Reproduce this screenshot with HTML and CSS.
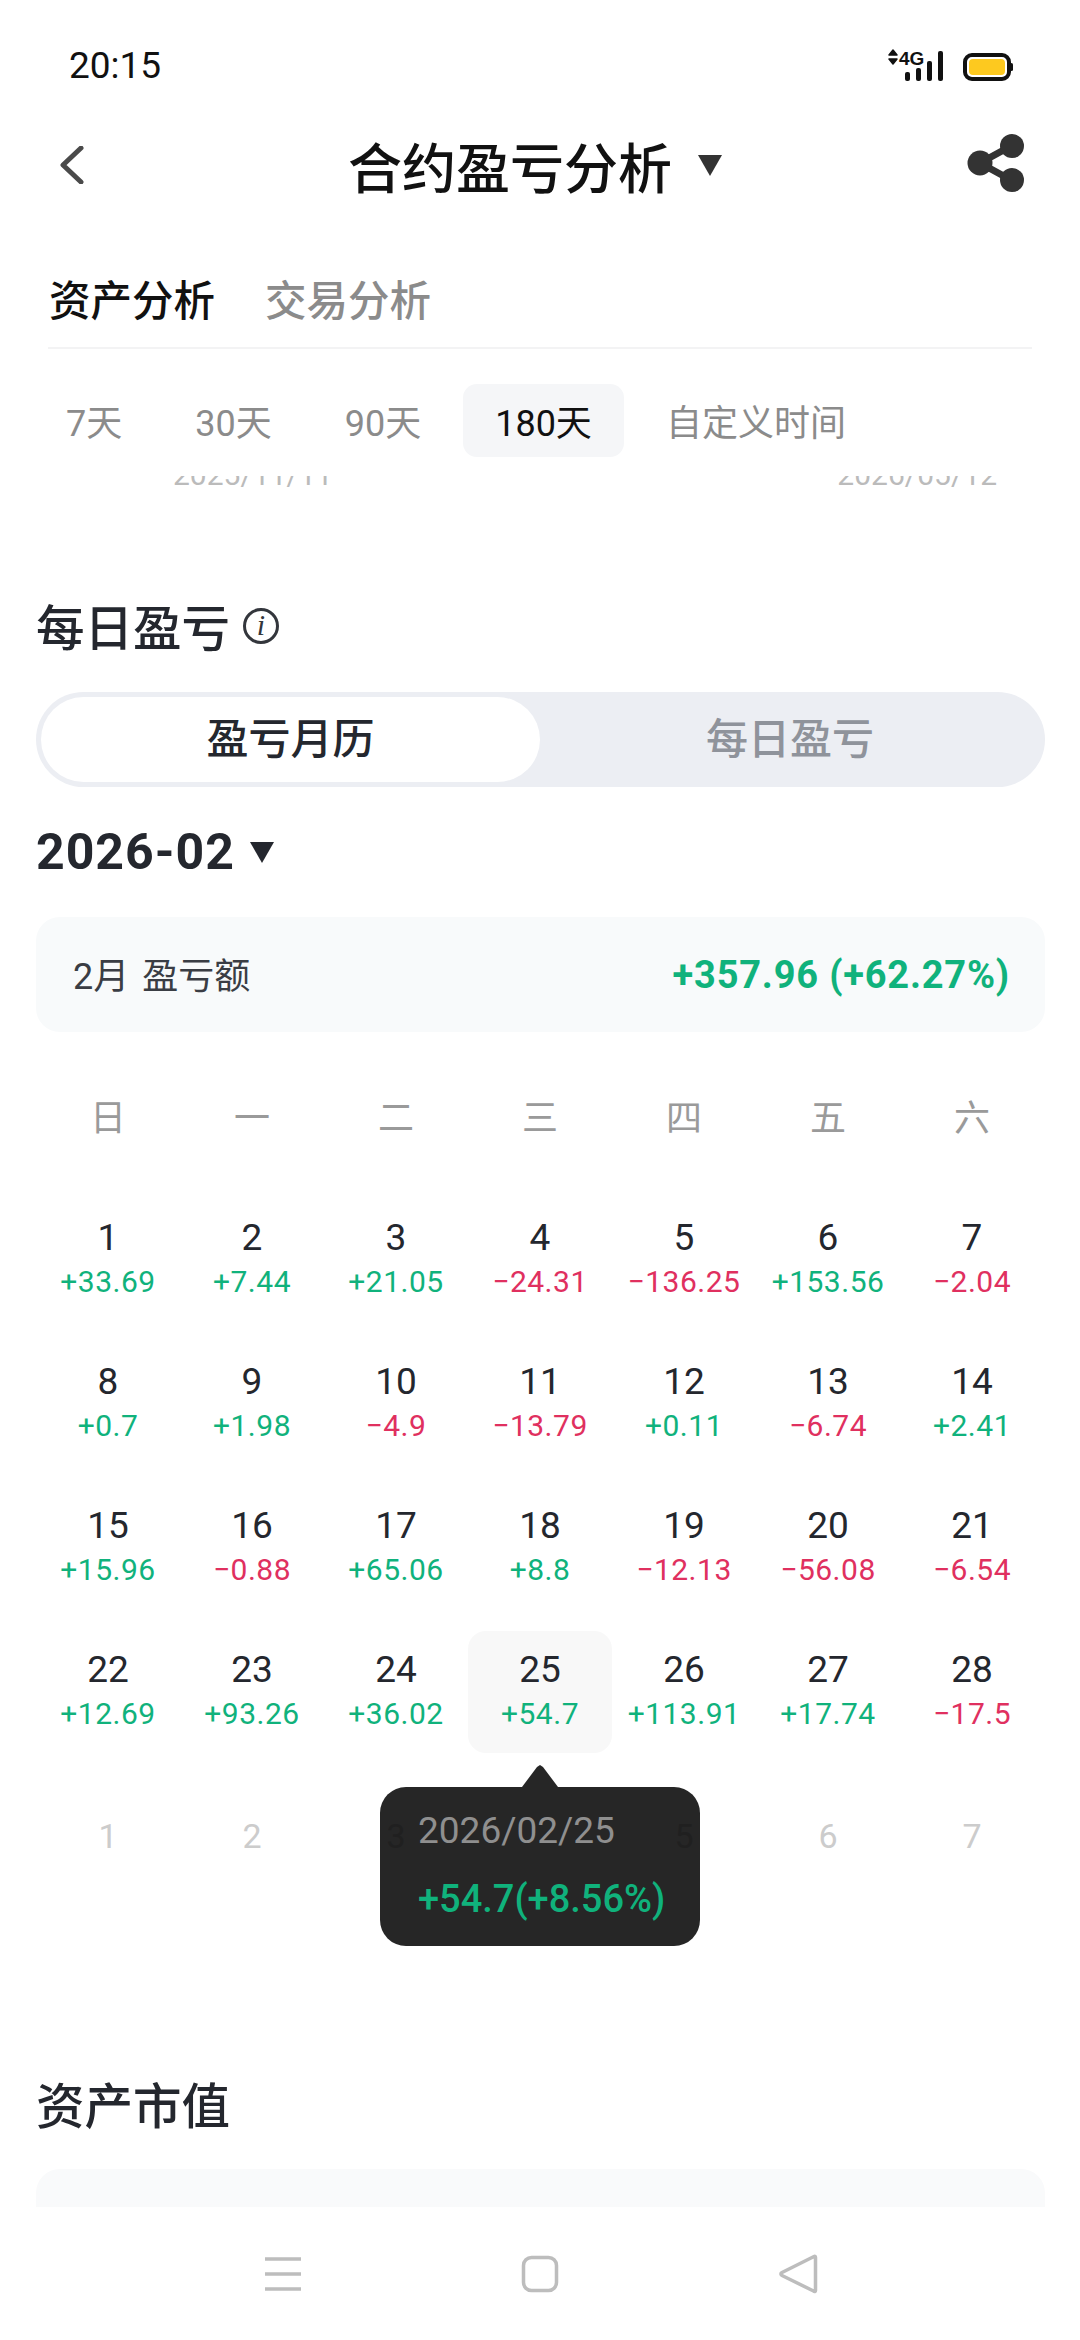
FILE: index.html
```html
<!DOCTYPE html>
<html lang="zh-CN">
<head>
    <meta charset="UTF-8">
    <meta name="viewport" content="width=device-width, initial-scale=1.0">
    <title>合约盈亏分析</title>
    <link rel="stylesheet" href="styles.css">
</head>
<body>
<div class="page">

    <div class="status">
        <span class="time">20:15</span>
        <svg class="status_icons" width="130" height="36" viewBox="0 0 130 36">
            <path d="M3 8 L7 3 L11 8 Z M3 12 L7 17 L11 12 Z" fill="#111" stroke="#111" stroke-width="1.5" stroke-linejoin="round"/>
            <text x="13" y="18" class="net_text">4G</text>
            <g fill="#111">
                <rect x="19" y="25" width="5" height="9" rx="2"/>
                <rect x="30" y="21" width="5" height="13" rx="2"/>
                <rect x="41" y="14" width="5" height="20" rx="2"/>
                <rect x="52" y="4" width="5" height="30" rx="2"/>
            </g>
            <rect x="79" y="8" width="44" height="24" rx="7" fill="#fff" stroke="#111" stroke-width="4"/>
            <rect x="83" y="12" width="36" height="16" rx="4" fill="#fdc91f"/>
            <rect x="124" y="16" width="3" height="8" rx="1.5" fill="#111"/>
        </svg>
    </div>

    <div class="nav">
        <svg class="back" width="25" height="38" viewBox="0 0 25 38">
            <path d="M22 2 L4 19 L22 36" fill="none" stroke="#4a4a4a" stroke-width="5" stroke-linecap="round" stroke-linejoin="round"/>
        </svg>
        <div class="nav_title">
            <span>合约盈亏分析</span>
            <i class="caret caret_big"></i>
        </div>
        <svg class="share" width="58" height="60" viewBox="0 0 58 60">
            <path d="M44 13 L13 30 L44 47" fill="none" stroke="#333" stroke-width="7"/>
            <circle cx="45" cy="13" r="12" fill="#333"/>
            <circle cx="13" cy="30" r="12.500" fill="#333"/>
            <circle cx="45" cy="47" r="12" fill="#333"/>
        </svg>
    </div>

    <div class="tabs">
        <span class="tab active">资产分析</span>
        <span class="tab">交易分析</span>
    </div>

    <div class="periods">
        <span class="period">7天</span>
        <span class="period">30天</span>
        <span class="period">90天</span>
        <span class="period active">180天</span>
        <span class="period">自定义时间</span>
    </div>

    <div class="scroll">
        <div class="axis">
            <span>2025/11/11</span>
            <span>2026/05/12</span>
        </div>

        <div class="section_title title_daily">
            <span>每日盈亏</span>
            <svg class="info" width="38" height="38" viewBox="0 0 38 38">
                <circle cx="19" cy="19" r="16.500" fill="none" stroke="#33363c" stroke-width="3"/>
                <text x="19" y="28" class="info_text">i</text>
            </svg>
        </div>

        <div class="segment">
            <span class="seg_item active">盈亏月历</span>
            <span class="seg_item">每日盈亏</span>
        </div>

        <div class="month">
            <span>2026-02</span>
            <i class="caret"></i>
        </div>

        <div class="summary">
            <span class="summary_label">2月 盈亏额</span>
            <span class="summary_value">+357.96 (+62.27%)</span>
        </div>

        <div class="weekdays">
            <span>日</span><span>一</span><span>二</span><span>三</span><span>四</span><span>五</span><span>六</span>
        </div>

        <div class="days">
            <div class="day"><b>1</b><span class="up">+33.69</span></div>
            <div class="day"><b>2</b><span class="up">+7.44</span></div>
            <div class="day"><b>3</b><span class="up">+21.05</span></div>
            <div class="day"><b>4</b><span class="down">−24.31</span></div>
            <div class="day"><b>5</b><span class="down">−136.25</span></div>
            <div class="day"><b>6</b><span class="up">+153.56</span></div>
            <div class="day"><b>7</b><span class="down">−2.04</span></div>

            <div class="day"><b>8</b><span class="up">+0.7</span></div>
            <div class="day"><b>9</b><span class="up">+1.98</span></div>
            <div class="day"><b>10</b><span class="down">−4.9</span></div>
            <div class="day"><b>11</b><span class="down">−13.79</span></div>
            <div class="day"><b>12</b><span class="up">+0.11</span></div>
            <div class="day"><b>13</b><span class="down">−6.74</span></div>
            <div class="day"><b>14</b><span class="up">+2.41</span></div>

            <div class="day"><b>15</b><span class="up">+15.96</span></div>
            <div class="day"><b>16</b><span class="down">−0.88</span></div>
            <div class="day"><b>17</b><span class="up">+65.06</span></div>
            <div class="day"><b>18</b><span class="up">+8.8</span></div>
            <div class="day"><b>19</b><span class="down">−12.13</span></div>
            <div class="day"><b>20</b><span class="down">−56.08</span></div>
            <div class="day"><b>21</b><span class="down">−6.54</span></div>

            <div class="day"><b>22</b><span class="up">+12.69</span></div>
            <div class="day"><b>23</b><span class="up">+93.26</span></div>
            <div class="day"><b>24</b><span class="up">+36.02</span></div>
            <div class="day selected">
                <b>25</b><span class="up">+54.7</span>
                <div class="tooltip">
                    <p class="tip_date">2026/02/25</p>
                    <p class="tip_value">+54.7(+8.56%)</p>
                </div>
            </div>
            <div class="day"><b>26</b><span class="up">+113.91</span></div>
            <div class="day"><b>27</b><span class="up">+17.74</span></div>
            <div class="day"><b>28</b><span class="down">−17.5</span></div>

            <div class="day next"><b>1</b></div>
            <div class="day next"><b>2</b></div>
            <div class="day next behind"><b>3</b></div>
            <div class="day next behind skip_one"><b>5</b></div>
            <div class="day next"><b>6</b></div>
            <div class="day next"><b>7</b></div>
        </div>

        <div class="section_title title_assets"><span>资产市值</span></div>
        <div class="assets_card"></div>
    </div>

    <div class="sysbar">
        <svg width="38" height="36" viewBox="0 0 38 36">
            <path d="M1 3 H37 M1 18 H37 M1 33 H37" stroke="#bdbdbd" stroke-width="3.500"/>
        </svg>
        <svg width="38" height="38" viewBox="0 0 38 38">
            <rect x="2.500" y="2.500" width="33" height="33" rx="8" fill="none" stroke="#bdbdbd" stroke-width="3.500"/>
        </svg>
        <svg width="40" height="42" viewBox="0 0 40 42">
            <path d="M36 3.500 C37 3 37.500 3.500 37.500 4.500 V37.500 C37.500 38.500 36.500 39 35.500 38 L4 22.500 C2.500 21.500 2.500 20.500 4 19.500 Z" fill="none" stroke="#bdbdbd" stroke-width="3.500" stroke-linejoin="round"/>
        </svg>
    </div>

</div>
</body>
</html>
```

FILE: styles.css
```css
* {
    box-sizing: border-box;
}
body {
    margin: 0;
    background: #fff;
    font-family: Roboto, "Noto Sans CJK SC", sans-serif;
    color: #24272e;
}
p {
    margin: 0;
}
.page {
    width: 1080px;
    height: 2340px;
    display: flex;
    flex-direction: column;
    overflow: hidden;
}

/* status bar */
.status {
    height: 105px;
    flex: none;
    padding: 43px 64px 0 69px;
    display: flex;
    justify-content: space-between;
    align-items: flex-start;
}
.time {
    font-size: 37px;
    line-height: 46px;
    color: #111;
}
.status_icons {
    margin-top: 4px;
}
.net_text {
    font-family: "Liberation Sans", sans-serif;
    font-size: 19px;
    font-weight: 700;
    fill: #111;
}

/* title bar */
.nav {
    height: 120px;
    flex: none;
    padding: 0 55px 0 59px;
    display: grid;
    grid-template-columns: 1fr auto 1fr;
    align-items: center;
}
.share {
    justify-self: end;
    margin-top: -4px;
}
.nav_title {
    display: flex;
    align-items: center;
    gap: 26px;
    padding-right: 14px;
    font-size: 54px;
    font-weight: 500;
    color: #111;
}
.caret {
    display: block;
    width: 0;
    height: 0;
    border-left: 12px solid transparent;
    border-right: 12px solid transparent;
    border-top: 21px solid #24272e;
}
.caret_big {
    border-top-color: #333;
}

/* tabs */
.tabs {
    flex: none;
    margin: 0 48px;
    padding: 47px 0 15px 1px;
    display: flex;
    gap: 50px;
    border-bottom: 2px solid #f3f3f4;
}
.tab {
    font-size: 41.500px;
    line-height: 60px;
    font-weight: 500;
    color: #8b8b8b;
}
.tab.active {
    color: #111;
}

.periods {
    flex: none;
    padding: 35px 0 19px 35px;
    display: flex;
    gap: 11px;
}
.period {
    height: 73px;
    padding: 7px 31px 0;
    font-size: 36px;
    line-height: 66px;
    color: #8b8b8b;
    border-radius: 14px;
}
.period.active {
    padding: 7px 32px 0;
    background: #f5f6f8;
    color: #111;
}

/* scrolled content, cut off under the period row */
.scroll {
    flex: 1;
    min-height: 0;
    overflow: hidden;
}
.axis {
    height: 14px;
    padding: 0 83px 0 173px;
    display: flex;
    justify-content: space-between;
    align-items: flex-end;
    font-size: 30px;
    line-height: 1;
    color: #bbb;
}
.section_title {
    display: flex;
    align-items: center;
    gap: 12px;
    padding-left: 36px;
    font-size: 48.500px;
    line-height: 60px;
    font-weight: 500;
}
.title_daily {
    margin-top: 110px;
}
.info {
    margin-top: -8px;
}
.info_text {
    font-family: "Liberation Serif", serif;
    font-style: italic;
    font-size: 30px;
    text-anchor: middle;
    fill: #33363c;
}

.segment {
    margin: 32px 35px 0 36px;
    height: 95px;
    padding: 5px;
    display: flex;
    background: #eceef3;
    border-radius: 48px;
}
.seg_item {
    flex: 1;
    text-align: center;
    font-size: 42px;
    line-height: 85px;
    font-weight: 500;
    color: #8f939b;
    border-radius: 43px;
}
.seg_item.active {
    flex: none;
    width: 499px;
    background: #fff;
    color: #24272e;
}

.month {
    margin-top: 35px;
    padding-left: 36px;
    display: flex;
    align-items: center;
    gap: 15px;
    font-size: 50px;
    line-height: 60px;
    font-weight: 700;
    letter-spacing: 1px;
}
.summary {
    margin: 35px 35px 0 36px;
    height: 115px;
    padding: 0 35px 0 37px;
    display: flex;
    justify-content: space-between;
    align-items: center;
    background: #f8fafb;
    border-radius: 24px;
}
.summary_label {
    margin-top: -3px;
    font-size: 36px;
    word-spacing: 4px;
    color: #3a3d44;
}
.summary_value {
    font-size: 38px;
    font-weight: 700;
    letter-spacing: 0.8px;
    color: #10b27c;
}

/* calendar */
.weekdays,
.days {
    margin: 0 36px;
    display: grid;
    grid-template-columns: repeat(7, 144px);
}
.weekdays {
    margin-top: 53px;
    height: 60px;
    align-items: center;
    text-align: center;
    font-size: 36px;
    color: #9a9a9a;
}
.days {
    margin-top: 54px;
    row-gap: 22px;
}
.day {
    position: relative;
    height: 122px;
    display: flex;
    flex-direction: column;
    align-items: center;
    justify-content: center;
    border-radius: 18px;
}
.day b {
    font-size: 37px;
    line-height: 44px;
    font-weight: 400;
}
.day span {
    font-size: 30px;
    line-height: 44px;
    letter-spacing: 0.5px;
}
.day .up {
    color: #10b27c;
}
.day .down {
    color: #e0305f;
}
.day.selected {
    background: #f8f8f8;
}
.day.next b {
    font-size: 34px;
    color: #ccc;
}
/* the 3rd and 5th show through the tooltip as faint dark marks, the 4th is hidden by it */
.day.behind {
    z-index: 2;
}
.day.next.behind b {
    color: #202020;
}
.day.skip_one {
    grid-column: 5;
}

.tooltip {
    position: absolute;
    z-index: 1;
    top: 156px;
    left: 50%;
    transform: translateX(-50%);
    width: 320px;
    height: 159px;
    padding: 22px 0 0 38px;
    background: #262626;
    border-radius: 26px;
    white-space: nowrap;
}
.tooltip::before {
    content: "";
    position: absolute;
    top: -22px;
    left: 142px;
    width: 36px;
    height: 22px;
    background: #262626;
    clip-path: polygon(0 100%, 15px 2px, 18px 0, 21px 2px, 100% 100%);
}
.tip_date {
    font-size: 37px;
    line-height: 44px;
    color: #8f8f8f;
}
.tip_value {
    margin-top: 24px;
    font-size: 38px;
    line-height: 44px;
    font-weight: 500;
    color: #10b27c;
}

.title_assets {
    margin-top: 181px;
}
.assets_card {
    margin: 31px 35px 0 36px;
    height: 300px;
    background: #f9fafb;
    border-radius: 24px;
}

/* android navigation bar */
.sysbar {
    height: 133px;
    flex: none;
    padding: 0 262px 0 264px;
    display: flex;
    justify-content: space-between;
    align-items: center;
    background: #fff;
}
```
